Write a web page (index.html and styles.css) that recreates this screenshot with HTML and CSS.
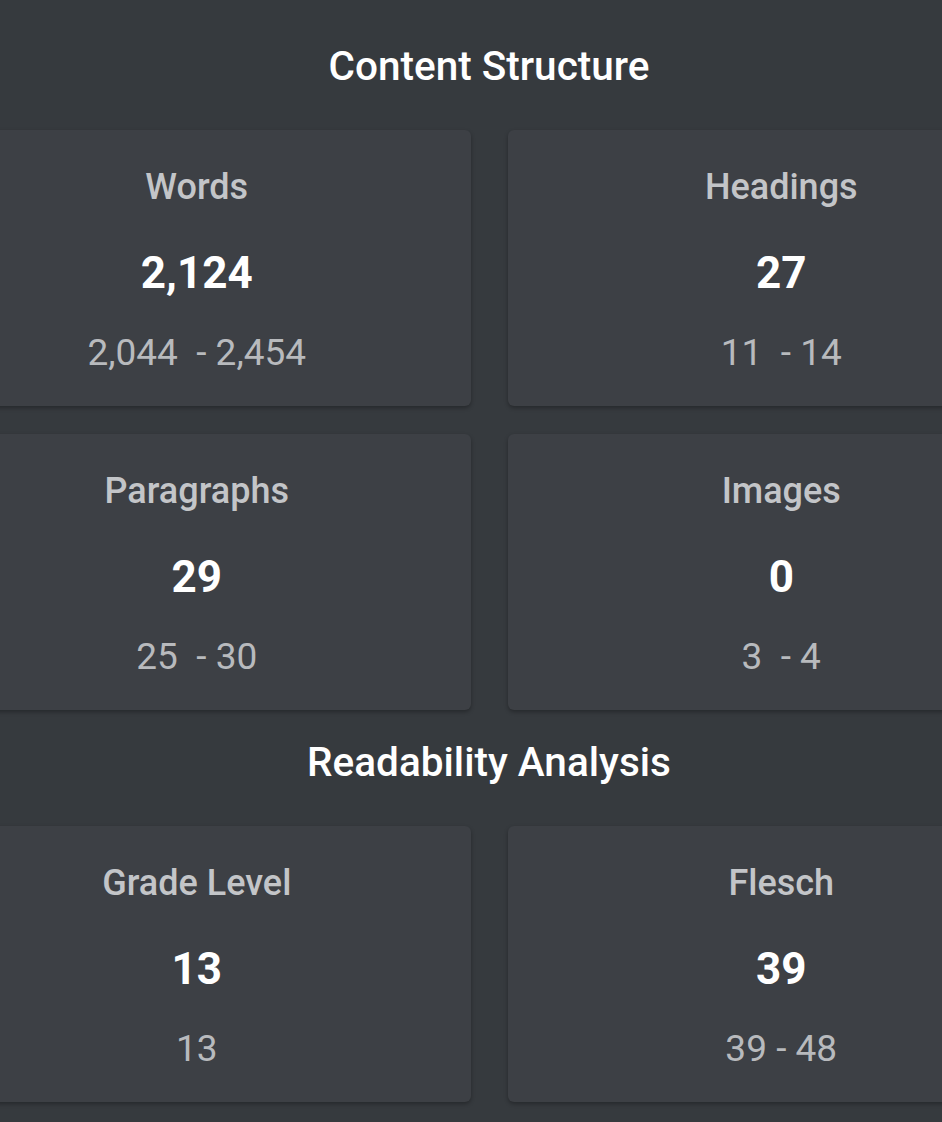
FILE: index.html
```html
<!DOCTYPE html>
<html lang="en">
<head>
<meta charset="UTF-8">
<meta name="viewport" content="width=device-width, initial-scale=1.0">
<title>Content Report</title>
<link rel="stylesheet" href="styles.css">
</head>
<body>

<div class="report">
  <section class="section">
    <h2 class="section-title">Content Structure</h2>
    <div class="stat-grid">
      <div class="stat-card">
        <div class="stat-label">Words</div>
        <div class="stat-value">2,124</div>
        <div class="stat-range">2,044&nbsp; - 2,454</div>
      </div>
      <div class="stat-card">
        <div class="stat-label">Headings</div>
        <div class="stat-value">27</div>
        <div class="stat-range">11&nbsp; - 14</div>
      </div>
      <div class="stat-card">
        <div class="stat-label">Paragraphs</div>
        <div class="stat-value">29</div>
        <div class="stat-range">25&nbsp; - 30</div>
      </div>
      <div class="stat-card">
        <div class="stat-label">Images</div>
        <div class="stat-value">0</div>
        <div class="stat-range">3&nbsp; - 4</div>
      </div>
    </div>
  </section>

  <section class="section">
    <h2 class="section-title">Readability Analysis</h2>
    <div class="stat-grid">
      <div class="stat-card">
        <div class="stat-label">Grade Level</div>
        <div class="stat-value">13</div>
        <div class="stat-range">13</div>
      </div>
      <div class="stat-card">
        <div class="stat-label">Flesch</div>
        <div class="stat-value">39</div>
        <div class="stat-range">39 - 48</div>
      </div>
    </div>
  </section>
</div>

</body>
</html>
```

FILE: styles.css
```css
/* Report layout */
html, body {
  margin: 0;
  height: 100%;
  background-color: #363a3e;
  overflow: hidden;
}

body {
  font-family: Roboto, "Liberation Sans", sans-serif;
  color: #ffffff;
}

.report {
  width: 1132px;
  margin-left: -77px;
  padding-top: 42px;
}

.section + .section {
  margin-top: 28px;
}

.section-title {
  margin: 0 0 40px;
  font-size: 40.5px;
  line-height: 48px;
  font-weight: 500;
  text-align: center;
  color: #ffffff;
}

.stat-grid {
  display: grid;
  grid-template-columns: 1fr 1fr;
  column-gap: 37px;
  row-gap: 28px;
}

.stat-card {
  background-color: #3d4045;
  border-radius: 6px;
  box-shadow: 0 2px 4px rgba(0, 0, 0, 0.3);
  padding: 33px 0 29px;
  text-align: center;
}

.stat-label {
  font-size: 36px;
  line-height: 48px;
  font-weight: 500;
  color: #c3c5c8;
  margin-bottom: 36px;
}

.stat-value {
  font-size: 44px;
  line-height: 52px;
  font-weight: 700;
  color: #ffffff;
  margin-bottom: 30px;
}

.stat-range {
  font-size: 37px;
  line-height: 48px;
  color: #b8babd;
}
```
